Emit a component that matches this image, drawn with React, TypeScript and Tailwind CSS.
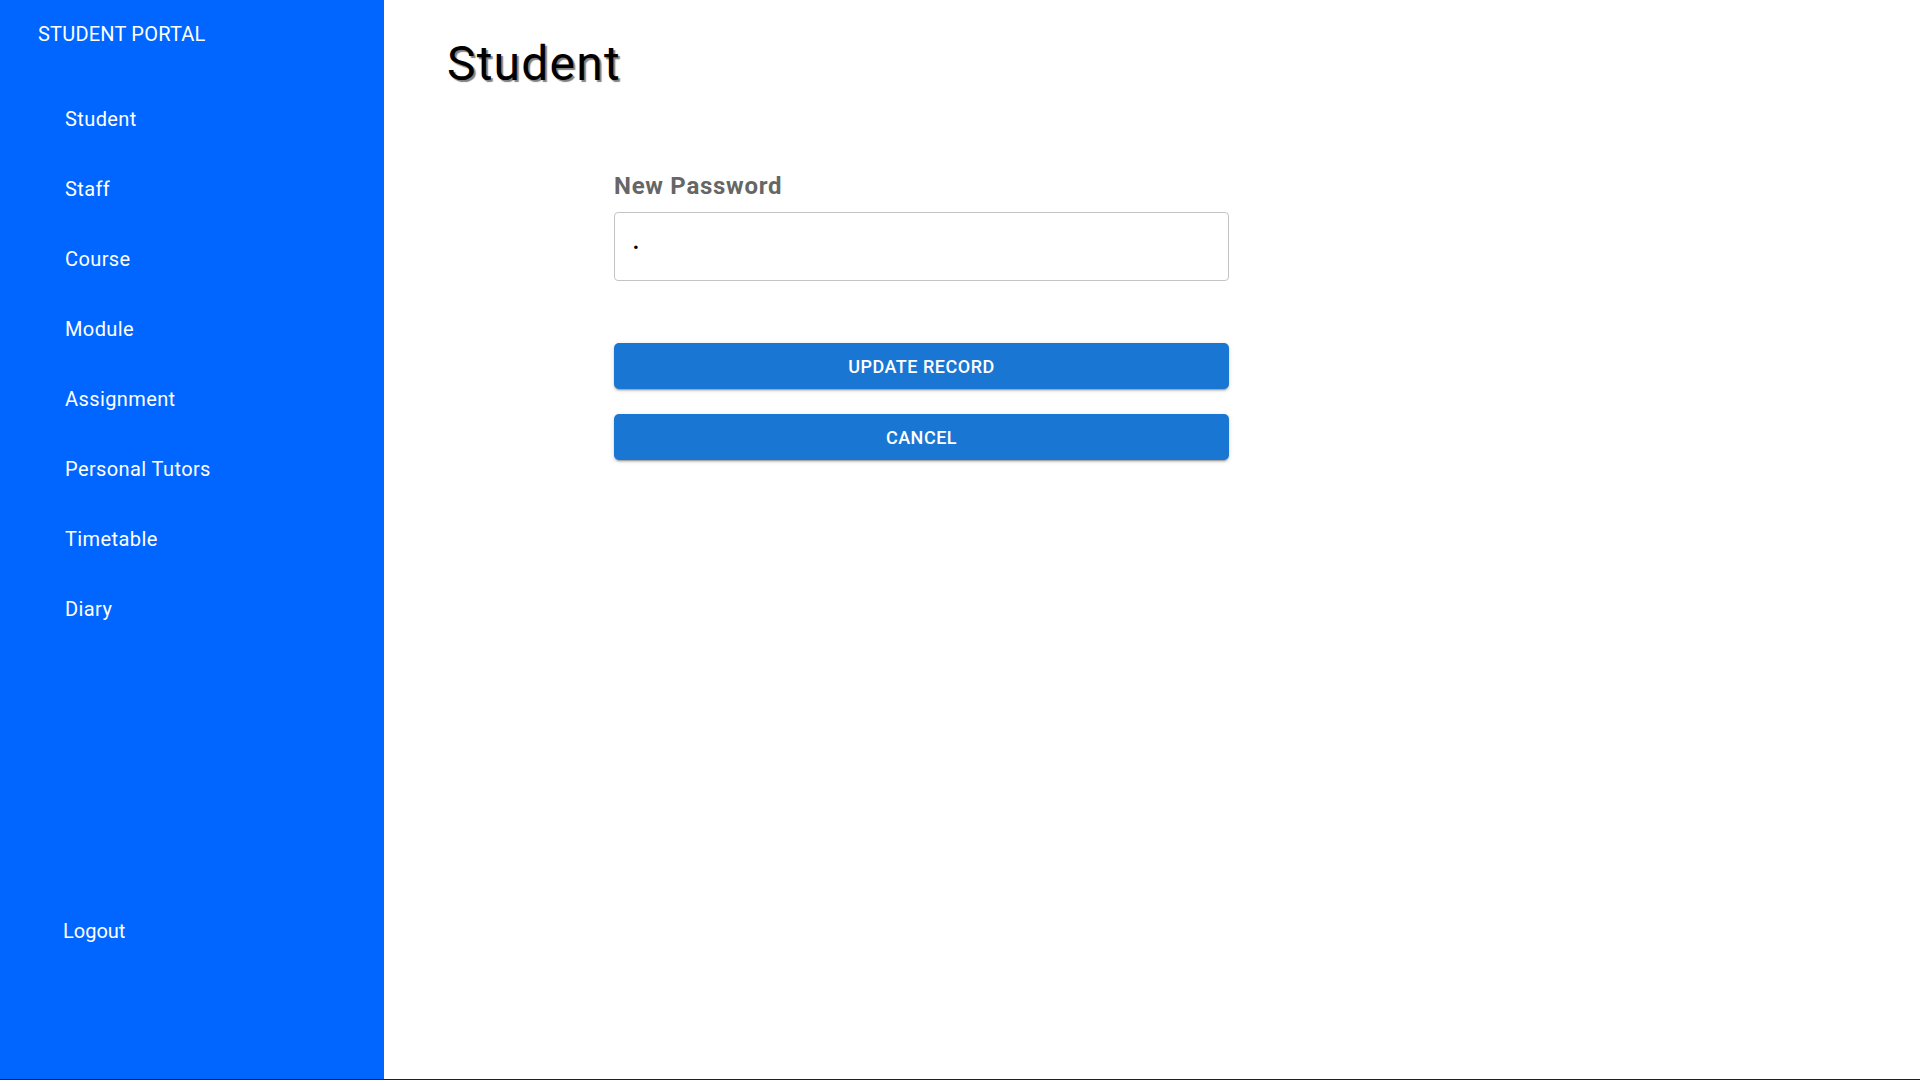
import React from "react";

const navItems = ["Student", "Staff", "Course", "Module", "Assignment", "Personal Tutors", "Timetable", "Diary"];

export default function App() {
    return (
        <div className="flex h-[1080px] w-full flex-col bg-[#202020] font-['Roboto',sans-serif]">
            <div className="flex h-[1079px] w-full">

                {/* Sidebar */}
                <aside className="flex w-[384px] shrink-0 flex-col bg-[#0066ff] pb-[113px] text-white">
                    <div className="flex h-[68px] items-center pl-[38px] text-[20px] leading-none tracking-[0.01em]">STUDENT PORTAL</div>
                    <nav className="mt-[16px] flex flex-col">
                        {navItems.map((item) => (
                            <a key={item} href="#" className="flex h-[70px] items-center pl-[65px] text-[20px] leading-none tracking-[0.02em]">
                                {item}
                            </a>
                        ))}
                    </nav>
                    <a href="#" className="mt-auto flex h-[70px] items-center pl-[63px] text-[20px] leading-none">Logout</a>
                </aside>

                {/* Main */}
                <main className="flex-1 bg-white pl-[63px] pt-[40px]">
                    <h1 className="text-[48px] leading-none tracking-[0.025em] text-black [text-shadow:2px_2px_1px_rgba(0,0,0,0.5)]">Student</h1>

                    <form className="ml-[167px] mt-[86px] flex w-[615px] flex-col" onSubmit={(e) => e.preventDefault()}>
                        <label className="text-[24px] font-bold leading-none tracking-[0.03em] text-[#666666]">New Password</label>
                        <input
                            type="password"
                            defaultValue="a"
                            readOnly
                            className="mt-[14px] h-[69px] w-full rounded-[4px] border border-[#c4c4c4] pl-[18px] text-[17px] text-black outline-none"
                        />
                        <button
                            type="submit"
                            className="mt-[62px] h-[46px] w-full rounded-[5px] bg-[#1976d2] text-[18px] font-medium uppercase tracking-[0.02857em] text-white shadow-[0px_3px_1px_-2px_rgba(0,0,0,0.2),0px_2px_2px_0px_rgba(0,0,0,0.14),0px_1px_5px_0px_rgba(0,0,0,0.12)]"
                        >
                            Update Record
                        </button>
                        <button
                            type="button"
                            className="mt-[25px] h-[46px] w-full rounded-[5px] bg-[#1976d2] text-[18px] font-medium uppercase tracking-[0.02857em] text-white shadow-[0px_3px_1px_-2px_rgba(0,0,0,0.2),0px_2px_2px_0px_rgba(0,0,0,0.14),0px_1px_5px_0px_rgba(0,0,0,0.12)]"
                        >
                            Cancel
                        </button>
                    </form>
                </main>
            </div>
        </div>
    );
}
